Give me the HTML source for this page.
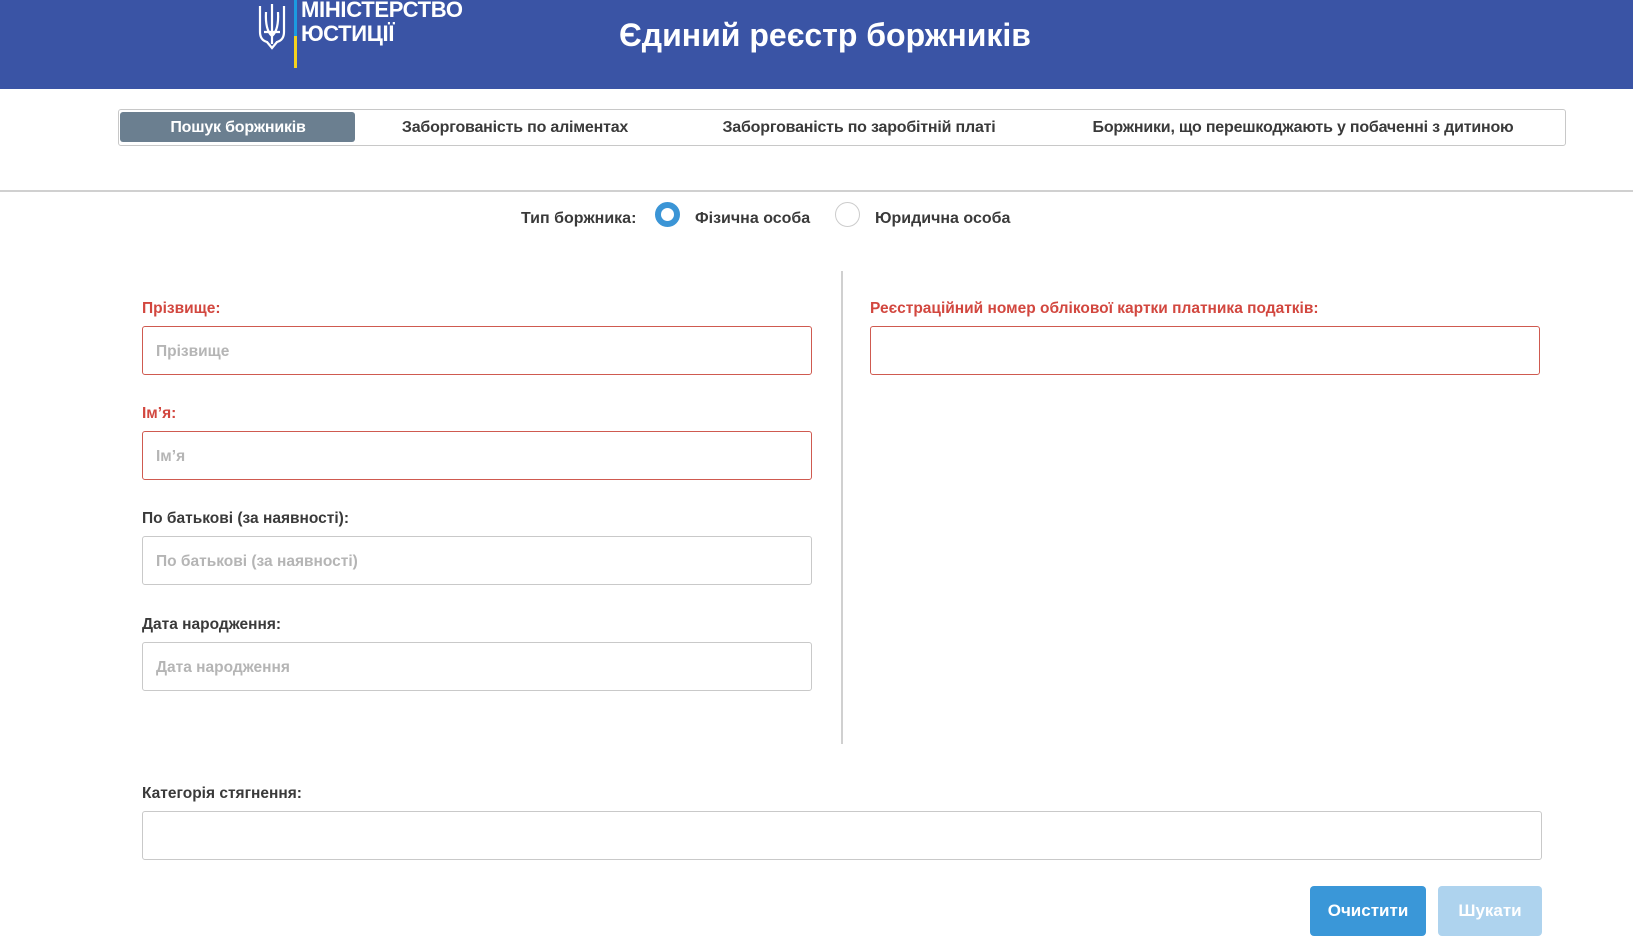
<!DOCTYPE html>
<html><head><meta charset="utf-8"><style>
*{box-sizing:border-box;margin:0;padding:0}
body{width:1633px;height:930px;overflow:hidden;background:#fff;font-family:"Liberation Sans","Noto Sans CJK SC",sans-serif;color:#3a3a3a;position:relative}
.a{position:absolute}
.hdr{left:0;top:0;width:1633px;height:89px;background:#3a54a5}
.title{left:0;width:1650px;top:17px;text-align:center;color:#fff;font-size:32px;font-weight:bold}
.tabs{left:118px;top:109px;width:1448px;height:37px;border:1px solid #c8c8c8;border-radius:3px}
.act{left:120px;top:112px;width:235px;height:30px;background:#6b7f90;border-radius:3px}
.tab{top:119px;font-size:16px;font-weight:bold;color:#3a3a3a;transform:translateX(-50%);white-space:nowrap;letter-spacing:-0.2px}
.lbl{font-size:15.5px;font-weight:bold;color:#3a3a3a}
.red{color:#d2473f}
.inp{height:49px;border:1px solid #c9c9c9;border-radius:3px;padding-left:13px;line-height:49px;font-size:15.5px;font-weight:bold;color:#b5b5b5}
.ri{border-color:#cf5a50}
.btn{top:886px;height:50px;border-radius:4px;color:#fff;font-size:17px;font-weight:bold;text-align:center;line-height:50px}
</style></head><body>
<div class="a hdr"></div>
<svg class="a" style="left:257px;top:2px" width="30" height="48" viewBox="0 0 30 48" fill="none" stroke="#fff" stroke-width="2.2">
<path d="M3 4 L3 30 Q3 38 10 40 L15 46 L20 40 Q27 38 27 30 L27 4"/>
<path d="M15 2 L15 42 M9 10 Q8 28 15 34 Q22 28 21 10 M7 30 L23 30"/>
</svg>
<div class="a" style="left:294px;top:0;width:3px;height:36px;background:#1b9be0"></div>
<div class="a" style="left:294px;top:36px;width:3px;height:32px;background:#f4d21f"></div>
<div class="a" style="left:301px;top:-2px;color:#fff;font-size:22px;line-height:24px;letter-spacing:-0.3px;font-weight:bold">МІНІСТЕРСТВО<br>ЮСТИЦІЇ</div>
<div class="a title">Єдиний реєстр боржників</div>
<div class="a tabs"></div>
<div class="a act"></div>
<div class="a tab" style="left:238px;color:#fff">Пошук боржників</div>
<div class="a tab" style="left:515px">Заборгованість по аліментах</div>
<div class="a tab" style="left:859px">Заборгованість по заробітній платі</div>
<div class="a tab" style="left:1303px">Боржники, що перешкоджають у побаченні з дитиною</div>
<div class="a" style="left:0;top:190px;width:1633px;height:2px;background:#d0d0d0"></div>
<div class="a lbl" style="left:521px;top:210px;font-size:16px">Тип боржника:</div>
<div class="a" style="left:655px;top:202px;width:25px;height:25px;border:6px solid #3b95d6;border-radius:50%"></div>
<div class="a lbl" style="left:695px;top:210px;font-size:16px">Фізична особа</div>
<div class="a" style="left:835px;top:202px;width:25px;height:25px;border:1px solid #ccc;border-radius:50%"></div>
<div class="a lbl" style="left:875px;top:210px;font-size:16px">Юридична особа</div>
<div class="a" style="left:841px;top:271px;width:2px;height:473px;background:#d0d0d0"></div>
<div class="a lbl red" style="left:142px;top:300px">Прізвище:</div>
<div class="a inp ri" style="left:142px;top:326px;width:670px">Прізвище</div>
<div class="a lbl red" style="left:142px;top:405px">Ім’я:</div>
<div class="a inp ri" style="left:142px;top:431px;width:670px">Ім’я</div>
<div class="a lbl" style="left:142px;top:510px">По батькові (за наявності):</div>
<div class="a inp" style="left:142px;top:536px;width:670px">По батькові (за наявності)</div>
<div class="a lbl" style="left:142px;top:616px">Дата народження:</div>
<div class="a inp" style="left:142px;top:642px;width:670px">Дата народження</div>
<div class="a lbl red" style="left:870px;top:300px">Реєстраційний номер облікової картки платника податків:</div>
<div class="a inp ri" style="left:870px;top:326px;width:670px"></div>
<div class="a lbl" style="left:142px;top:785px">Категорія стягнення:</div>
<div class="a inp" style="left:142px;top:811px;width:1400px"></div>
<div class="a btn" style="left:1310px;width:116px;background:#3a97d8">Очистити</div>
<div class="a btn" style="left:1438px;width:104px;background:#aed3ee">Шукати</div>
</body></html>
